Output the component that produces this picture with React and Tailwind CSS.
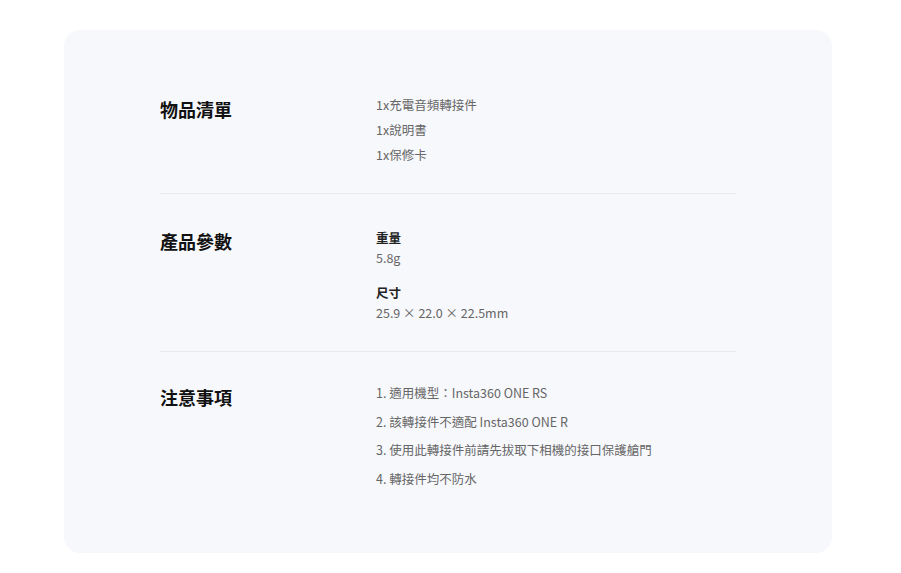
export default function App() {
  const font = { fontFamily: '"Noto Sans CJK TC", "Noto Sans", sans-serif' };
  return (
    <div className="min-h-[573px] bg-white pt-[30px] pb-[20px]" style={font}>
      <div className="ml-[64px] w-[768px] rounded-[16px] bg-[#f7f8fc] px-[96px] pt-[62px] pb-[60px]">
        {/* Section 1 */}
        <div className="flex border-b border-[#e9ebf0] pb-[26px]">
          <div className="w-[216px] shrink-0 mt-[3px] text-[18px] leading-[28px] font-bold text-[#111]">物品清單</div>
          <div className="flex flex-col text-[12.5px] leading-[25px] text-[#666]">
            <div>1x充電音頻轉接件</div>
            <div>1x說明書</div>
            <div>1x保修卡</div>
          </div>
        </div>
        {/* Section 2 */}
        <div className="flex border-b border-[#e9ebf0] pt-[34px] pb-[28px]">
          <div className="w-[216px] shrink-0 -mt-[1px] text-[18px] leading-[28px] font-bold text-[#111]">產品參數</div>
          <div className="flex flex-col gap-[15px] text-[12.5px] leading-[20px]">
            <div className="flex flex-col">
              <div className="font-bold text-[#222]">重量</div>
              <div className="text-[#666]">5.8g</div>
            </div>
            <div className="flex flex-col">
              <div className="font-bold text-[#222]">尺寸</div>
              <div className="text-[#666]">25.9 × 22.0 × 22.5mm</div>
            </div>
          </div>
        </div>
        {/* Section 3 */}
        <div className="flex pt-[27px]">
          <div className="w-[216px] shrink-0 mt-[4px] text-[18px] leading-[28px] font-bold text-[#111]">注意事項</div>
          <div className="flex flex-col text-[12.5px] leading-[28.5px] text-[#666]">
            <div>1. 適用機型：Insta360 ONE RS</div>
            <div>2. 該轉接件不適配 Insta360 ONE R</div>
            <div>3. 使用此轉接件前請先拔取下相機的接口保護艙門</div>
            <div>4. 轉接件均不防水</div>
          </div>
        </div>
      </div>
    </div>
  );
}
